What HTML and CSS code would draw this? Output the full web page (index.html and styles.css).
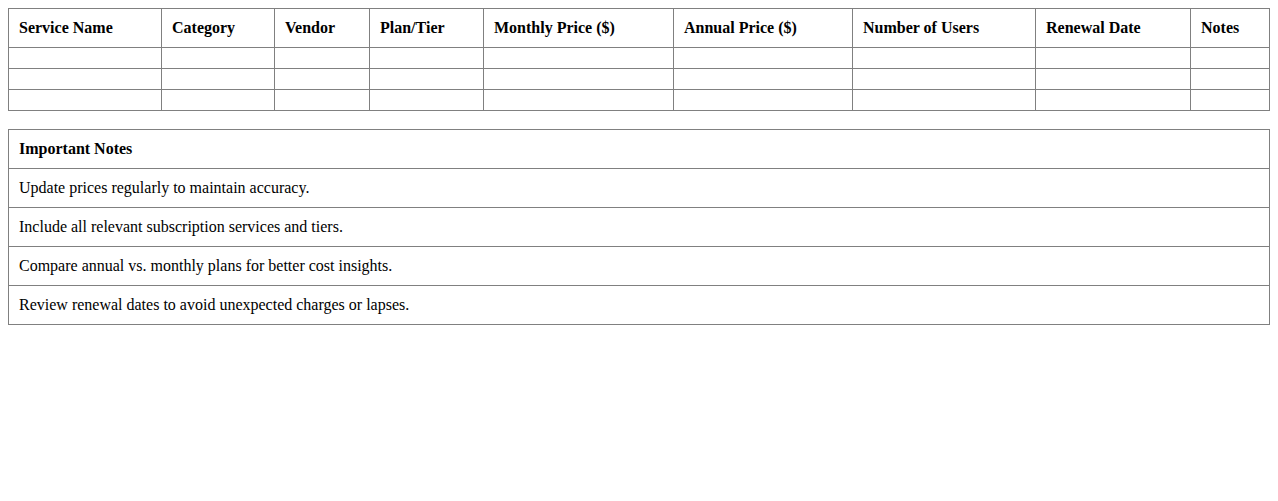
FILE: index.html
```html
<!DOCTYPE html>
<html>
<head>
<meta charset="utf-8">
<link rel="stylesheet" href="styles.css">
</head>
<body>
<table class="grid">
  <colgroup>
    <col class="c1"><col class="c2"><col class="c3"><col class="c4"><col class="c5"><col class="c6"><col class="c7"><col class="c8"><col class="c9">
  </colgroup>
  <thead>
    <tr>
      <th>Service Name</th>
      <th>Category</th>
      <th>Vendor</th>
      <th>Plan/Tier</th>
      <th>Monthly Price ($)</th>
      <th>Annual Price ($)</th>
      <th>Number of Users</th>
      <th>Renewal Date</th>
      <th>Notes</th>
    </tr>
  </thead>
  <tbody>
    <tr><td></td><td></td><td></td><td></td><td></td><td></td><td></td><td></td><td></td></tr>
    <tr><td></td><td></td><td></td><td></td><td></td><td></td><td></td><td></td><td></td></tr>
    <tr><td></td><td></td><td></td><td></td><td></td><td></td><td></td><td></td><td></td></tr>
  </tbody>
</table>
<table class="grid notes">
  <thead>
    <tr><th>Important Notes</th></tr>
  </thead>
  <tbody>
    <tr><td>Update prices regularly to maintain accuracy.</td></tr>
    <tr><td>Include all relevant subscription services and tiers.</td></tr>
    <tr><td>Compare annual vs. monthly plans for better cost insights.</td></tr>
    <tr><td>Review renewal dates to avoid unexpected charges or lapses.</td></tr>
  </tbody>
</table>
</body>
</html>
```
FILE: styles.css
```css
body {
  margin: 8px;
  font-family: "Liberation Serif", "Times New Roman", serif;
  font-size: 16px;
  color: #000;
  background: #fff;
}
.grid {
  width: 100%;
  border-collapse: collapse;
  table-layout: fixed;
}
.grid th,
.grid td {
  border: 1px solid #808080;
  padding: 10px;
  text-align: left;
  line-height: 18px;
  vertical-align: middle;
}
.grid th {
  font-weight: bold;
}
.grid tbody td:empty {
  height: 0;
  padding: 10px;
  line-height: 0;
}
.notes {
  margin-top: 18px;
}
.c1 { width: 153px; }
.c2 { width: 113px; }
.c3 { width: 95px; }
.c4 { width: 114px; }
.c5 { width: 190px; }
.c6 { width: 179px; }
.c7 { width: 183px; }
.c8 { width: 155px; }
.c9 { width: auto; }
```
